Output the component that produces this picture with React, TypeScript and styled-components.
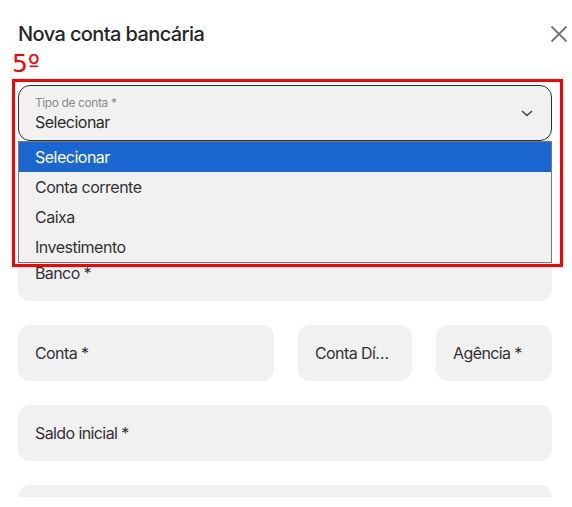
import React from 'react';
import styled, { createGlobalStyle } from 'styled-components';

const GlobalStyle = createGlobalStyle`
	html, body {
		margin: 0;
		padding: 0;
		background: #ffffff;
	}
	body {
		font-family: Inter, "Noto Sans", "Liberation Sans", sans-serif;
		color: #2b2b2b;
	}
`;

const options = ['Selecionar', 'Conta corrente', 'Caixa', 'Investimento'];

export default function App() {
	return (
		<>
			<GlobalStyle />
			<Modal>
				<Header>
					<Title>Nova conta bancária</Title>
					<CloseButton aria-label='Fechar'>
						<svg width='18' height='18' viewBox='0 0 18 18'>
							<path d='M1.5 1.5 L16.5 16.5 M16.5 1.5 L1.5 16.5' stroke='#767676' strokeWidth='1.8' fill='none' />
						</svg>
					</CloseButton>
				</Header>
				<Form>
					<SelectWrap>
						<SelectBox>
							<SmallLabel>Tipo de conta *</SmallLabel>
							<SelectValue>Selecionar</SelectValue>
							<Chevron width='12' height='7' viewBox='0 0 12 7'>
								<path d='M1 1 L6 5.5 L11 1' stroke='#444' strokeWidth='1.5' fill='none' />
							</Chevron>
						</SelectBox>
						<Listbox>
							{options.map((o, i) => (
								<Option key={o} selected={i === 0}>{o}</Option>
							))}
						</Listbox>
					</SelectWrap>
					<Field />
					<Field>Banco *</Field>
					<Row>
						<Field>Conta *</Field>
						<Field>Conta Dígito *</Field>
						<Field>Agência *</Field>
					</Row>
					<Field>Saldo inicial *</Field>
					<Field />
				</Form>
				<StepTag>5º</StepTag>
				<Highlight />
			</Modal>
		</>
	);
}

const Modal = styled.div`
	position: relative;
	height: 497px;
	overflow: hidden;
	padding: 0 20px 0 18px;
	box-sizing: border-box;
`;

const Header = styled.div`
	display: flex;
	align-items: center;
	justify-content: space-between;
	padding-top: 20px;
	height: 28px;
	margin-bottom: 37px;
`;

const Title = styled.h1`
	margin: 0;
	font-size: 20px;
	font-weight: 500;
	letter-spacing: -0.6px;
	color: #262626;
`;

const CloseButton = styled.button`
	border: none;
	background: none;
	padding: 0;
	margin-right: -16px;
	display: flex;
	cursor: pointer;
`;

const Form = styled.div`
	display: flex;
	flex-direction: column;
	gap: 24px;
`;

const Row = styled.div`
	display: grid;
	grid-template-columns: 256px 114px 1fr;
	gap: 24px;
`;

const Field = styled.div`
	height: 56px;
	line-height: 56px;
	border-radius: 12px;
	background: #f1f1f1;
	padding: 0 14px 0 17px;
	box-sizing: border-box;
	font-size: 16px;
	color: #333;
	letter-spacing: -0.6px;
	white-space: nowrap;
	overflow: hidden;
	text-overflow: ellipsis;
`;

const SelectWrap = styled.div`
	position: relative;
`;

const SelectBox = styled.div`
	position: relative;
	height: 56px;
	border-radius: 12px;
	border: 1px solid #2e2e2e;
	background: #f1f1f1;
	box-sizing: border-box;
	padding: 9px 16px 0 16px;
`;

const SmallLabel = styled.div`
	font-size: 12px;
	color: #8a8a8a;
	letter-spacing: -0.4px;
	line-height: 16px;
`;

const SelectValue = styled.div`
	font-size: 16px;
	color: #2b2b2b;
	letter-spacing: -0.5px;
	line-height: 20px;
	margin-top: 1px;
`;

const Chevron = styled.svg`
	position: absolute;
	right: 18px;
	top: 24px;
`;

const Listbox = styled.ul`
	position: absolute;
	top: 56px;
	left: 0;
	right: 0;
	margin: 0;
	padding: 0;
	list-style: none;
	background: #f1f1f1;
	border: 1px solid #7a7a7a;
	z-index: 2;
`;

const Option = styled.li<{ selected?: boolean }>`
	height: 30px;
	line-height: 30px;
	padding-left: 16px;
	font-size: 16px;
	letter-spacing: -0.5px;
	color: ${(p) => (p.selected ? '#ffffff' : '#333')};
	background: ${(p) => (p.selected ? '#1a67d2' : 'transparent')};
`;

const StepTag = styled.div`
	position: absolute;
	left: 12px;
	top: 50px;
	font-family: "DejaVu Sans", sans-serif;
	font-size: 25px;
	line-height: 28px;
	color: #ff0000;
	z-index: 3;
`;

const Highlight = styled.div`
	position: absolute;
	left: 12px;
	top: 79px;
	width: 551px;
	height: 188px;
	border: 3px solid #ff0000;
	box-sizing: border-box;
	z-index: 3;
	pointer-events: none;
`;
